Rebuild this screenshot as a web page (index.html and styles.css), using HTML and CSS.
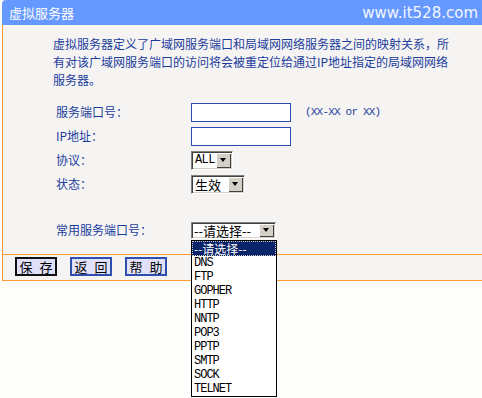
FILE: index.html
```html
<!DOCTYPE html>
<html lang="zh-CN">
  <head>
    <meta charset="UTF-8" />
    <title>虚拟服务器</title>
    <link rel="stylesheet" href="styles.css">
  </head>
  <body>
    <div class="page">
      <div class="title-bar">
        <span class="title">虚拟服务器</span>
        <span class="site">www.it528.com</span>
      </div>
      <div class="content">
        <div class="main">
          <p class="intro">虚拟服务器定义了广域网服务端口和局域网网络服务器之间的映射关系，所有对该广域网服务端口的访问将会被重定位给通过IP地址指定的局域网网络服务器。</p>
          <div class="form">
            <div class="row">
              <span class="label">服务端口号：</span>
              <span class="field"><span class="input"></span><span class="hint">(XX-XX or XX)</span></span>
            </div>
            <div class="row">
              <span class="label">IP地址：</span>
              <span class="field"><span class="input"></span></span>
            </div>
            <div class="row">
              <span class="label">协议：</span>
              <span class="field"><span class="select sel-proto"><span class="value mono">ALL</span><span class="arrow"></span></span></span>
            </div>
            <div class="row">
              <span class="label">状态：</span>
              <span class="field"><span class="select sel-state"><span class="value">生效</span><span class="arrow"></span></span></span>
            </div>
            <div class="row common">
              <span class="label">常用服务端口号：</span>
              <span class="field">
                <span class="select sel-common"><span class="value">--请选择--</span><span class="arrow"></span></span>
              </span>
            </div>
          </div>
        </div>
        <div class="actions">
          <button class="btn focus">保 存</button>
          <button class="btn">返 回</button>
          <button class="btn">帮 助</button>
        </div>
      </div>
      <ul class="dropdown">
        <li class="active">--请选择--</li>
        <li>DNS</li>
        <li>FTP</li>
        <li>GOPHER</li>
        <li>HTTP</li>
        <li>NNTP</li>
        <li>POP3</li>
        <li>PPTP</li>
        <li>SMTP</li>
        <li>SOCK</li>
        <li>TELNET</li>
      </ul>
    </div>
  </body>
</html>
```

FILE: styles.css
```css
* {
  margin: 0;
  padding: 0;
  box-sizing: border-box;
}
html,
body {
  min-height: 100%;
  height: 100%;
}
body {
  background: #fdfdfb;
  font-family: "Noto Sans CJK SC", "Liberation Sans", sans-serif;
  font-size: 12px;
  color: #1c3c9c;
}
.page {
  position: relative;
  min-height: 100%;
  margin-left: 2px;
}
.title-bar {
  height: 25px;
  display: flex;
  justify-content: space-between;
  align-items: center;
  padding: 0 4px 0 7px;
  background: #6699ff;
  border-top-left-radius: 4px;
  color: #fff;
}
.title {
  font-size: 13px;
}
.site {
  font-family: "DejaVu Sans", sans-serif;
  font-size: 15px;
  color: #f2f6ff;
}
.content {
  background: #f5f4f3;
  border-left: 1px solid #ff9933;
  border-bottom: 1px solid #ff9933;
}
.main {
  padding: 10px 0 12px 50px;
  border-bottom: 1px solid #ff9933;
}
.intro {
  width: 400px;
  line-height: 18px;
}
.form {
  margin: 11px 0 0 3px;
}
.row {
  display: grid;
  grid-template-columns: 135px auto;
  align-items: center;
  height: 24px;
}
.row.common {
  margin-top: 22px;
}
.label {
  line-height: 18px;
}
.field {
  display: flex;
  align-items: center;
}
.input {
  display: block;
  width: 100px;
  height: 19px;
  background: #fff;
  border: 1px solid #2a4cb0;
}
.hint {
  margin-left: 14px;
  font-family: "Liberation Mono", monospace;
  font-size: 11px;
  letter-spacing: -0.8px;
}
.select {
  display: flex;
  height: 19px;
  background: #fff;
  border: 1px solid;
  border-color: #808080 #fff #fff #808080;
  box-shadow: inset 1px 1px 0 #404040, inset -1px -1px 0 #d4d0c8;
  color: #000;
}
.sel-proto {
  width: 42px;
}
.sel-state {
  width: 54px;
}
.sel-common {
  width: 85px;
  height: 17px;
}
.value {
  flex: 1;
  padding: 1px 0 0 3px;
  font-size: 13px;
  line-height: 15px;
  white-space: nowrap;
}
.sel-common .value {
  padding: 0 0 0 2px;
  font-size: 13px;
  line-height: 15px;
}
.mono {
  font-family: "Liberation Mono", monospace;
  font-size: 12px;
  letter-spacing: -0.6px;
}
.arrow {
  position: relative;
  width: 15px;
  margin: 1px 1px 1px 0;
  background: #d4d0c8;
  box-shadow: inset 1px 1px 0 #fff, inset -1px -1px 0 #404040;
}
.arrow::after {
  content: "";
  position: absolute;
  left: 4px;
  top: 50%;
  margin-top: -2px;
  border-left: 3.5px solid transparent;
  border-right: 3.5px solid transparent;
  border-top: 4px solid #000;
}
.dropdown {
  position: absolute;
  top: 240px;
  left: 189px;
  width: 86px;
  list-style: none;
  background: #fff;
  border: 1px solid #000;
  z-index: 10;
}
.dropdown li {
  height: 14px;
  padding-left: 2px;
  font-family: "Liberation Mono", monospace;
  font-size: 12px;
  line-height: 14px;
  letter-spacing: -1px;
  color: #000;
}
.dropdown li.active {
  height: 15px;
  background: #0a246a;
  color: #fff;
  outline: 1px dotted #ccc;
  outline-offset: -1px;
  font-family: "Noto Sans CJK SC", sans-serif;
  font-size: 12px;
  line-height: 15px;
  letter-spacing: 0;
}
.actions {
  height: 25px;
  display: flex;
  gap: 13px;
  padding: 2px 0 0 12px;
}
.btn {
  width: 42px;
  height: 19px;
  background: #e0e0f8;
  border: 2px solid #2e4fb0;
  font-family: "Noto Sans CJK SC", sans-serif;
  font-size: 13px;
  line-height: 14px;
  word-spacing: 4px;
  color: #000;
}
.btn.focus {
  border-color: #111;
}
```
